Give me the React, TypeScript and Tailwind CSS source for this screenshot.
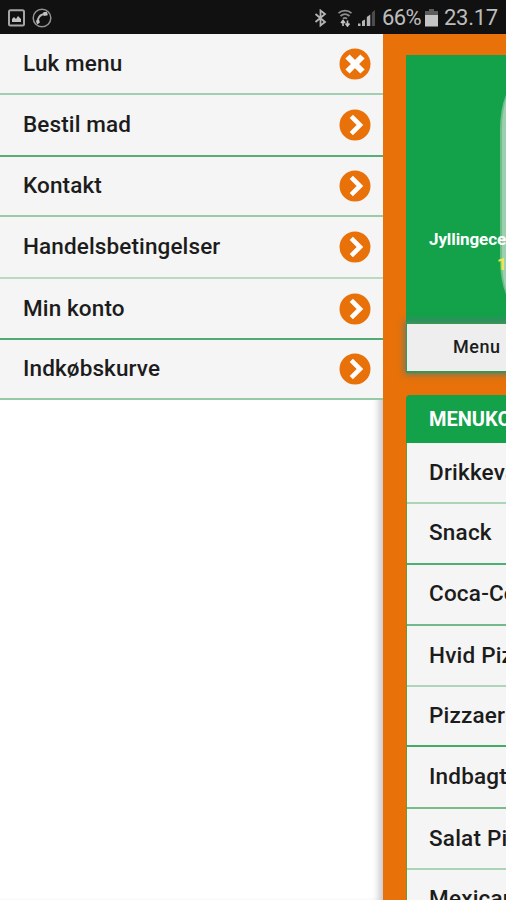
import React from "react";

const menuItems = [
  { label: "Luk menu", close: true, row: "h-[61px] border-b-2 border-[#9fcfb0]" },
  { label: "Bestil mad", row: "h-[62px] border-b-2 border-[#5aac79] pb-px" },
  { label: "Kontakt", row: "h-[60px] border-b-2 border-[#9bcba4]" },
  { label: "Handelsbetingelser", row: "h-[62px] border-b-2 border-[#b9d9c0] pb-px" },
  { label: "Min konto", row: "h-[61px] border-b-2 border-[#50aa76]" },
  { label: "Indkøbskurve", row: "h-[60px] border-b-2 border-[#94cba6]" },
];

const categories = [
  { label: "Drikkevarer", row: "h-[61px] border-b-2 border-[#abd6b5]" },
  { label: "Snack", row: "h-[61px] border-b-2 border-[#4fae72] pb-[2px]" },
  { label: "Coca-Cola", row: "h-[61px] border-b-2 border-[#72b98b] pb-[2px]" },
  { label: "Hvid Pizza", row: "h-[61px] border-b-2 border-[#afd6ba]" },
  { label: "Pizzaer", row: "h-[60px] border-b-2 border-[#45aa65] pb-px" },
  { label: "Indbagte", row: "h-[62px] border-b-2 border-[#7abc89] pb-[2px]" },
  { label: "Salat Pizza", row: "h-[61px] border-b-2 border-[#aad4b3]" },
  { label: "Mexicansk", row: "h-[61px] border-b-2 border-[#5aac79] pb-[2px]" },
];

export default function App() {
  return (
    <div className="flex h-[900px] w-[506px] flex-col overflow-hidden bg-white font-['Roboto',sans-serif] text-[#1c1c1c]">
      <StatusBar />
      <div className="flex min-h-0 flex-1">
        <SideMenu />
        <Page />
      </div>
    </div>
  );
}

function StatusBar() {
  return (
    <header className="flex h-[34px] shrink-0 items-center bg-[#111111] pt-[2px] pr-[9px] pl-2 text-[#bdbdbd]">
      <svg className="h-[18px] w-[17px]" viewBox="0 0 17 18" fill="none">
        <rect x="1" y="1.3" width="15" height="15.2" rx="1.5" stroke="#a5a5a5" strokeWidth="2" />
        <path d="M4 13V10l2-2 2 2 2-3 3 3v3z" fill="#c2c2c2" />
      </svg>
      <svg className="ml-[7px] h-5 w-5" viewBox="0 0 20 20" fill="none">
        <circle cx="10" cy="10" r="8.8" stroke="#929292" strokeWidth="1.5" />
        <path d="M5.5 15.5C5 10 8 6 14 5.8" stroke="#b5b5b5" strokeWidth="2" />
        <path d="M11.2 4.2l3.8-.5.8 3.5-4 .8zM4 12.5l3-.9.9 3-2.6 1.6z" fill="#c4c4c4" />
      </svg>

      <div className="ml-auto flex items-center">
        <svg className="h-[18px] w-[13px]" viewBox="0 0 13 18" fill="none" stroke="#b5b5b5" strokeWidth="1.8">
          <path d="M1.5 5l9.500 8-4.500 3.500V1.500L11 5l-9.500 8" />
        </svg>
        <svg className="ml-[10px] h-[18px] w-4" viewBox="0 0 16 18" fill="none" stroke="#8d8d8d" strokeWidth="1.8">
          <path d="M1.5 4.2c3.7-3.4 9.300-3.400 13 0M3.500 7c2.700-2.200 6.300-2.200 9 0M6 9.700c1.300-1 2.700-1 4 0" />
          <path d="M6 17v-5M4 14l2-2.500L8 14M10.500 11.500v5M8.500 14.500l2 2.500 2-2.500" stroke="#c4c4c4" strokeWidth="1.6" />
        </svg>
        <svg className="ml-[5px] h-[18px] w-[18px]" viewBox="0 0 18 18">
          <path d="M0 14.500h2.500V17H0z M4 12l3-1.500V17H4z M8.800 8l3.500-2.500V17H8.800z" fill="#b5b5b5" />
          <path d="M13.800 3.500L17 1v16h-3.200z" fill="#4c4c4c" />
        </svg>
        <span className="ml-[6px] w-[39px] text-[22px] leading-none tracking-[-0.6px]">66%</span>
        <svg className="ml-[4px] h-[18px] w-[13px]" viewBox="0 0 13 18">
          <path d="M4 0h5v2h4v5H0V2h4z" fill="#5c5c5c" />
          <path d="M0 6h13v11.5H0z" fill="#c4c4c4" />
        </svg>
        <span className="ml-[6px] w-[53px] text-[22px] leading-none tracking-[-0.3px]">23.17</span>
      </div>
    </header>
  );
}

function SideMenu() {
  return (
    <aside className="w-[383px] shrink-0 bg-white shadow-[inset_-8px_0_7px_-4px_#c9c6cb]">
      <nav>
        {menuItems.map((item) => (
          <button
            key={item.label}
            className={`flex w-full items-center justify-between bg-[#f5f5f5] pr-3 pl-[23px] text-left ${item.row}`}
          >
            <span className="pb-px text-[22.5px] font-medium leading-none tracking-[0.12px]">{item.label}</span>
            <RoundIcon close={item.close} />
          </button>
        ))}
      </nav>
    </aside>
  );
}

function RoundIcon({ close = false }: { close?: boolean }) {
  return (
    <svg className="h-8 w-8" viewBox="0 0 32 32" fill="none">
      <circle cx="16" cy="16" r="15.5" fill="#e87109" />
      {close ? (
        <path d="M8.5 8.5l15 15M23.5 8.5l-15 15" stroke="#fff" strokeWidth="6" />
      ) : (
        <path d="M12.3 7.3l8.7 8.7-8.7 8.7" stroke="#fff" strokeWidth="4.600" />
      )}
    </svg>
  );
}

function Page() {
  return (
    <main className="min-w-0 flex-1 overflow-hidden bg-[#e87109] pt-[21px] pl-[23px]">
      {/* Restaurant banner */}
      <section className="relative h-[267px] overflow-hidden bg-[#13a14a] pt-[173px] pl-[23px] whitespace-nowrap">
        <div className="absolute top-[26px] left-[94px] h-[227px] w-[280px] rounded-[20px/48px] border-l-2 border-[#6fbd8b] bg-[#9bd0ae]" />
        <p className="relative text-[17px] font-bold leading-[22px] tracking-[-0.1px] text-white">Jyllingecentret</p>
        <p className="relative mt-[3px] pl-[68px] text-[17px] font-bold leading-[22px] text-[#ece943]">12</p>
      </section>

      <button className="relative flex h-[51px] w-[160px] items-center border-y-2 border-l border-[#389653] bg-[#eeeeee] pb-[3px] pl-[46px] text-[18px] font-medium tracking-[0.5px] shadow-[0_0_7px_1px_#557b78]">
        Menu
      </button>

      {/* Categories */}
      <section className="mt-[22px] w-[160px]">
        <h2 className="flex h-[48px] items-center rounded-tl-[4px] bg-[#13a14a] pl-[23px] text-[20px] font-bold text-white">
          MENUKORT
        </h2>
        <ul className="border-l border-[#689b35]">
          {categories.map((category) => (
            <li
              key={category.label}
              className={`flex items-center bg-[#f5f5f5] pl-[22px] text-[22.5px] font-medium leading-none tracking-[0.2px] whitespace-nowrap ${category.row}`}
            >
              {category.label}
            </li>
          ))}
        </ul>
      </section>
    </main>
  );
}
